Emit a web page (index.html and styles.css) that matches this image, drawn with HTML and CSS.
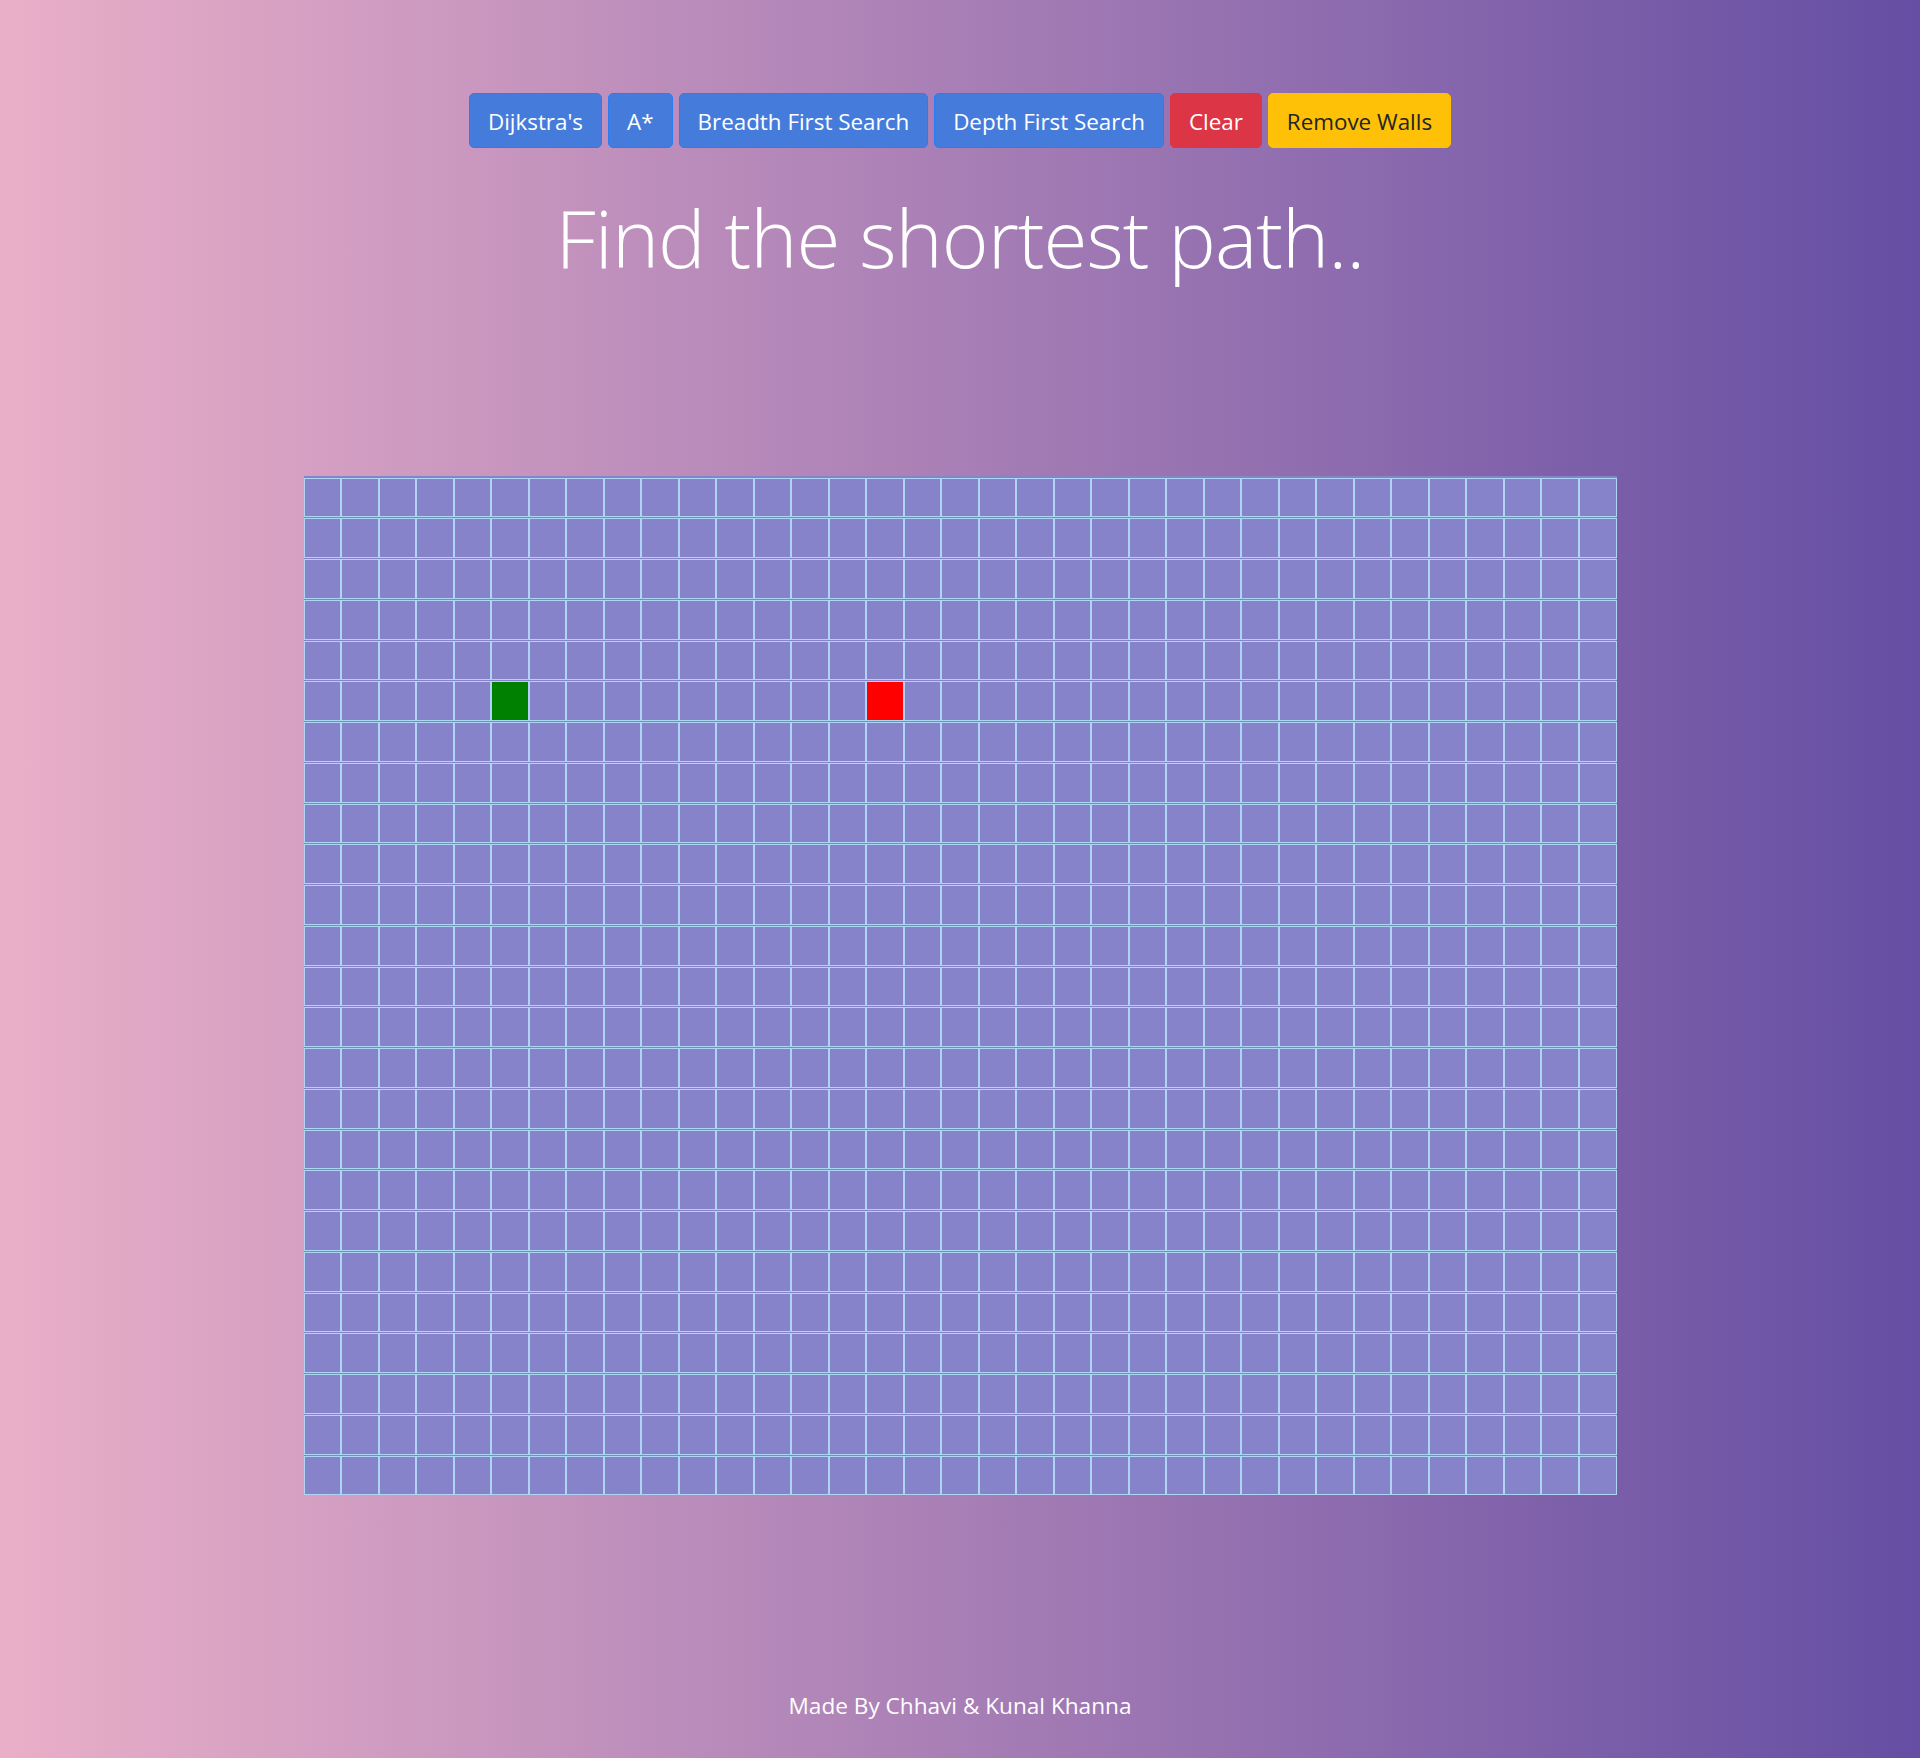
FILE: index.html
```html
<!DOCTYPE html>
<html lang="en">
<head>
<meta charset="utf-8">
<title>Path Finder</title>
<link rel="stylesheet" href="styles.css">
</head>
<body>
<div class="page">
  <nav class="toolbar">
    <button class="btn btn-blue">Dijkstra's</button>
    <button class="btn btn-blue">A*</button>
    <button class="btn btn-blue">Breadth First Search</button>
    <button class="btn btn-blue">Depth First Search</button>
    <button class="btn btn-red">Clear</button>
    <button class="btn btn-yellow">Remove Walls</button>
  </nav>
  <h1 class="title">Find the shortest path..</h1>
  <div class="grid" id="grid"></div>
  <footer class="footer">Made By Chhavi &amp; Kunal Khanna</footer>
</div>
<script src="app.js"></script>
</body>
</html>
```
FILE: styles.css
```css
* { box-sizing: border-box; }
html, body { margin: 0; padding: 0; }
body {
  min-height: 1758px;
  background: linear-gradient(to right, #eaafc8, #654ea3);
  font-family: "Open Sans", "Noto Sans", sans-serif;
  color: #fff;
}
.page {
  display: flex;
  flex-direction: column;
  align-items: center;
  padding-top: 93px;
}
.toolbar {
  display: flex;
  gap: 6px;
  justify-content: center;
}
.btn {
  font-family: "Open Sans", sans-serif;
  font-size: 22.4px;
  line-height: 30px;
  padding: 13px 18px 10px;
  border: 1px solid transparent;
  border-radius: 5px;
  color: #fff;
  cursor: pointer;
}
.btn-blue { background: #457cdc; border-color: #2b7cf2; }
.btn-red { background: #dc3545; border-color: #dc3545; }
.btn-yellow { background: #ffc107; border-color: #ffc107; color: #212529; }
.title {
  margin: 28.5px 0 0;
  font-family: "Open Sans", sans-serif;
  font-weight: 300;
  font-size: 80px;
  line-height: 120px;
  color: #fff;
  letter-spacing: -1px;
}
.grid {
  margin-top: 179px;
  width: 1313px;
  padding-top: 2px;
  background: #8783cb;
  display: grid;
  grid-template-columns: repeat(35, 1fr);
  row-gap: 1px;
}
.cell {
  height: 39.76px;
  border: 1px solid #acd6f4;
  background: #8783cb;
}
.cell.start { background: #008000; }
.cell.end { background: #ff0000; }
.footer {
  margin-top: 196px;
  font-size: 22.6px;
  line-height: 30px;
  color: #fff;
}
```
FILE: app.js
```js
const grid = document.getElementById('grid');
for (let r = 0; r < 25; r++) {
  for (let c = 0; c < 35; c++) {
    const d = document.createElement('div');
    d.className = 'cell';
    if (r === 5 && c === 5) d.classList.add('start');
    if (r === 5 && c === 15) d.classList.add('end');
    grid.appendChild(d);
  }
}
```
